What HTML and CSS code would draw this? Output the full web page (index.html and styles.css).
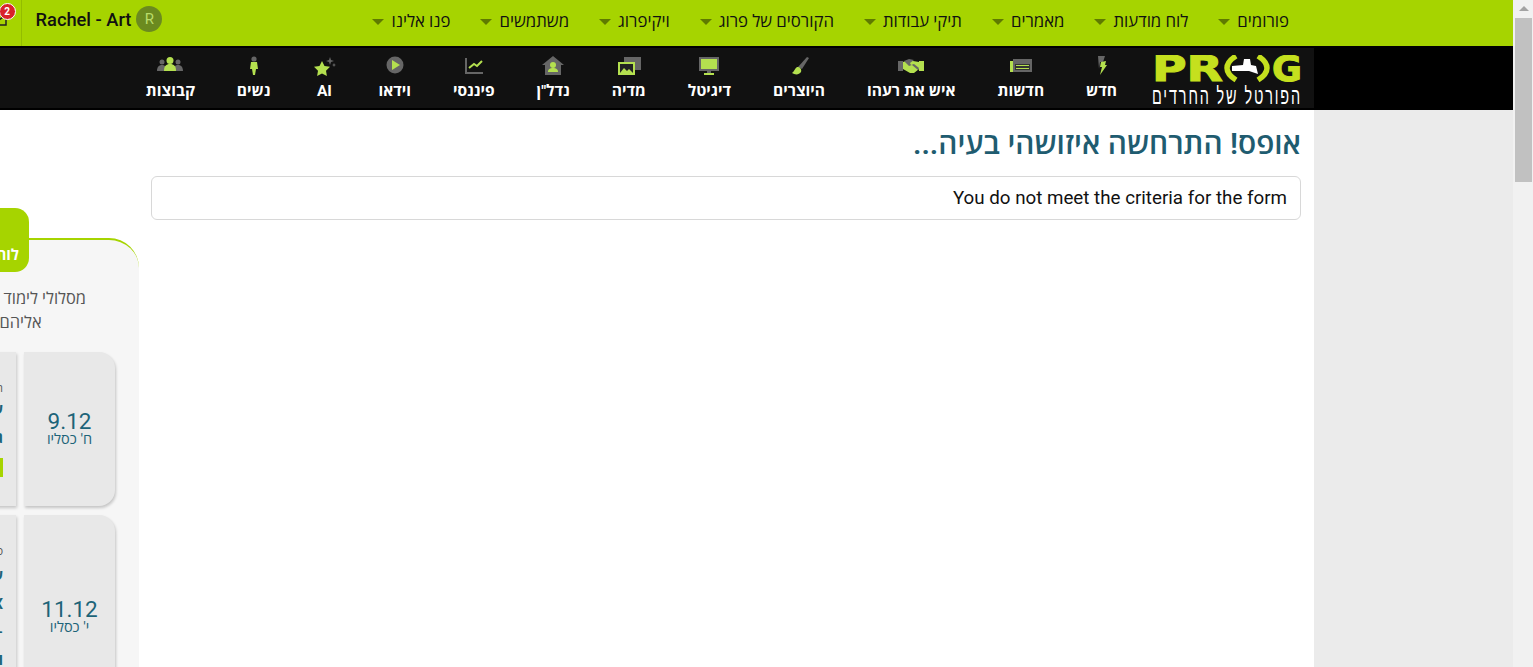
FILE: index.html
```html
<!DOCTYPE html>
<html lang="he" dir="rtl">
<head>
    <meta charset="UTF-8">
    <title>פרוג</title>
    <link rel="stylesheet" href="styles.css">
</head>
<body>
<div class="page">
    <div class="site">

        <!-- Top menu -->
        <div class="topbar">
            <ul class="top-menu">
                <li>פורומים</li>
                <li>לוח מודעות</li>
                <li>מאמרים</li>
                <li>תיקי עבודות</li>
                <li>הקורסים של פרוג</li>
                <li>ויקיפרוג</li>
                <li>משתמשים</li>
                <li>פנו אלינו</li>
            </ul>
            <div class="user-area">
                <div class="avatar">R</div>
                <div class="user-name" dir="ltr">Rachel - Art</div>
            </div>
            <div class="alerts">
                <svg class="alerts-icon" width="20" height="20" viewBox="0 0 20 20"><path d="M3 6h14v10H3zM3 6l7 5 7-5" fill="none" stroke="#222" stroke-width="1.5"/></svg>
                <span class="badge">2</span>
            </div>
        </div>

        <!-- Category bar -->
        <div class="catbar">
            <div class="catbar-inner">
                <div class="logo">
                    <svg class="logo-mark" width="150" height="50" viewBox="0 0 150 50">
                        <text x="0" y="26" class="logo-letters" textLength="71" lengthAdjust="spacingAndGlyphs">PR</text>
                        <text x="120" y="26" class="logo-letters" textLength="30" lengthAdjust="spacingAndGlyphs">G</text>
                        <path d="M84 1C76 6 75 10 75 13s1 7 9 12" fill="none" stroke="#c5e01e" stroke-width="5.500"/>
                        <path d="M106 1c8 5 9 9 9 12s-1 7-9 12" fill="none" stroke="#c5e01e" stroke-width="5.500"/>
                        <path d="M80 11l11-1 1-6h6l1 6 5 1 2 8-9-3-17 0z" fill="#fff"/>
                        <text x="150" y="49" class="logo-sub" textLength="150" lengthAdjust="spacingAndGlyphs">הפורטל של החרדים</text>
                    </svg>
                </div>
                <ul class="cat-menu">
                    <li>
                        <svg width="26" height="20" viewBox="0 0 26 20"><path d="M9 0h7l-2 6h-3l-1 7z" fill="#666"/><path d="M17 5l-1 4h2l-7 10 2-8h-2l1-5z" fill="#b4e04f"/></svg>
                        <span>חדש</span>
                    </li>
                    <li>
                        <svg width="26" height="20" viewBox="0 0 26 20"><path d="M5 3h19v13H5z" fill="#666"/><path d="M7 8h15v6H7z" fill="#333"/><path d="M8 9.500h13M8 12.500h13" stroke="#b4e04f" stroke-width="1.200"/><path d="M2 5h3v11H2z" fill="#b4e04f"/></svg>
                        <span>חדשות</span>
                    </li>
                    <li>
                        <svg width="26" height="20" viewBox="0 0 26 20"><path d="M0 5h5v10H0z" fill="#666"/><path d="M21 5h5v10h-5z" fill="#b4e04f"/><path d="M5 6l6-2 4 1 6 1v7l-5 4-4 0-7-4z" fill="#b4e04f"/><path d="M6 5l5-2 5 1-4 3 1 2 3-1 5 4-1 2-6-5-3 1-2-2z" fill="#666"/></svg>
                        <span>איש את רעהו</span>
                    </li>
                    <li>
                        <svg width="26" height="20" viewBox="0 0 26 20"><path d="M21 1l2 1-7 11-4-2z" fill="#666"/><path d="M11 11c3 0 5 2 4 5-2 3-6 3-9 1 2-1 3-5 5-6z" fill="#b4e04f"/></svg>
                        <span>היוצרים</span>
                    </li>
                    <li>
                        <svg width="26" height="20" viewBox="0 0 26 20"><path d="M3 1h20v14H3z" fill="#666"/><path d="M5 3h16v10H5z" fill="#b4e04f"/><path d="M11 15h4v2h-4z" fill="#666"/><path d="M8 17h10v2H8z" fill="#b4e04f"/></svg>
                        <span>דיגיטל</span>
                    </li>
                    <li>
                        <svg width="26" height="20" viewBox="0 0 26 20"><path d="M8 1h17v13H8z" fill="#666"/><path d="M2 6h17v13H2z" fill="#b4e04f"/><path d="M4 8h13v9H4z" fill="#222"/><path d="M4 17l4-5 3 3 2-2 4 4z" fill="#b4e04f"/></svg>
                        <span>מדיה</span>
                    </li>
                    <li>
                        <svg width="26" height="20" viewBox="0 0 26 20"><path d="M13 0l11 9h-3v10H5V9H2z" fill="#666"/><circle cx="13" cy="9" r="3" fill="#b4e04f"/><path d="M8 16c0-3 2-4 5-4s5 1 5 4z" fill="#b4e04f"/></svg>
                        <span>נדל"ן</span>
                    </li>
                    <li>
                        <svg width="26" height="20" viewBox="0 0 26 20"><path d="M5 2v15h17" fill="none" stroke="#666" stroke-width="2"/><path d="M8 12l5-4 3 2 5-5" fill="none" stroke="#b4e04f" stroke-width="2"/></svg>
                        <span>פיננסי</span>
                    </li>
                    <li>
                        <svg width="26" height="20" viewBox="0 0 26 20"><circle cx="13" cy="9" r="8.500" fill="#666"/><path d="M10 4l8 5-8 5z" fill="#b4e04f"/></svg>
                        <span>וידאו</span>
                    </li>
                    <li>
                        <svg width="26" height="20" viewBox="0 0 26 20"><path d="M11 5l2.500 5 5.500.8-4 3.900.9 5.300-4.900-2.600-4.900 2.600.9-5.300-4-3.900 5.500-.8z" fill="#b4e04f"/><path d="M19 1l1 3 3 1-3 1-1 3-1-3-3-1 3-1zM23 7l.7 1.500 1.300.5-1.300.5-.7 1.500-.7-1.500-1.300-.5 1.300-.5z" fill="#666"/></svg>
                        <span>AI</span>
                    </li>
                    <li>
                        <svg width="26" height="20" viewBox="0 0 26 20"><circle cx="13" cy="3" r="2.600" fill="#666"/><path d="M10 6h6l1 7h-2l-1 6h-2l-1-6H9z" fill="#b4e04f"/></svg>
                        <span>נשים</span>
                    </li>
                    <li>
                        <svg width="26" height="20" viewBox="0 0 26 20"><circle cx="5" cy="6" r="2.500" fill="#666"/><circle cx="21" cy="6" r="2.500" fill="#666"/><path d="M0 15c0-4 2-6 5-6s5 2 5 6zM16 15c0-4 2-6 5-6s5 2 5 6z" fill="#666"/><circle cx="13" cy="4.500" r="3.500" fill="#b4e04f"/><path d="M7 15c0-5 2-7 6-7s6 2 6 7z" fill="#b4e04f"/></svg>
                        <span>קבוצות</span>
                    </li>
                </ul>
            </div>
        </div>

        <div class="site-body">
            <!-- Error message -->
            <div class="main">
                <h1 class="error-title">אופס! התרחשה איזושהי בעיה...</h1>
                <div class="error-box" dir="ltr">You do not meet the criteria for the form</div>
            </div>

            <!-- Calendar side panel -->
            <div class="side">
                <div class="side-tab">לוח אירועים</div>
                <div class="side-panel">
                    <p class="side-intro">מסלולי לימוד חדשים<br>אליהם</p>
                    <div class="event">
                        <div class="event-date">
                            <div class="event-day">9.12</div>
                            <div class="event-heb">ח' כסליו</div>
                        </div>
                        <div class="event-body">
                            <div class="event-small">הרצאה</div>
                            <div class="event-line">עיצוב</div>
                            <div class="event-line">גרפי</div>
                            <div class="event-btn">להרשמה</div>
                        </div>
                    </div>
                    <div class="event event-tall">
                        <div class="event-date">
                            <div class="event-day">11.12</div>
                            <div class="event-heb">י' כסליו</div>
                        </div>
                        <div class="event-body">
                            <div class="event-small">סדנה</div>
                            <div class="event-line">עריכה</div>
                            <div class="event-line">X</div>
                            <div class="event-line">-</div>
                            <div class="event-line">וידאו</div>
                        </div>
                    </div>
                </div>
            </div>
        </div>
    </div>

    <!-- Window scrollbar -->
    <div class="scrollbar">
        <div class="scroll-up"></div>
        <div class="scroll-thumb"></div>
    </div>
</div>
</body>
</html>
```

FILE: styles.css
```css
* {
    box-sizing: border-box;
}

html, body {
    margin: 0;
    height: 100%;
    overflow: hidden;
}

body {
    font-family: Roboto, "Open Sans", "Noto Sans", sans-serif;
    color: #111;
}

ul {
    list-style: none;
    margin: 0;
    padding: 0;
}

.page {
    display: flex;
    direction: ltr;
    height: 667px;
    background-color: #ebebeb;
}

.site {
    flex: 1;
    min-width: 0;
    overflow: hidden;
    direction: rtl;
}

/* Top menu */
.topbar {
    display: flex;
    align-items: center;
    height: 46px;
    padding-right: 224px;
    background-color: #a6d400;
}

.top-menu {
    display: flex;
    gap: 30px;
    flex-shrink: 0;
    padding-bottom: 6px;
}

.top-menu li {
    display: flex;
    align-items: center;
    gap: 7px;
    font-size: 16.75px;
    font-weight: 500;
    white-space: nowrap;
}

.top-menu li::after {
    content: "";
    border-top: 6px solid #5f7a00;
    border-left: 6px solid transparent;
    border-right: 6px solid transparent;
    margin-top: 4px;
}

.user-area {
    display: flex;
    align-items: center;
    gap: 5px;
    flex-shrink: 0;
    height: 46px;
    margin-right: 210px;
    padding-left: 14px;
    padding-bottom: 8px;
    border-left: 1px solid #93bc00;
}

.user-name {
    font-size: 18.3px;
    font-weight: 500;
}

.avatar {
    display: flex;
    align-items: center;
    justify-content: center;
    width: 26px;
    height: 26px;
    border-radius: 50%;
    background-color: #6b8a1f;
    color: #b9dc6a;
    font-size: 15px;
}

.alerts {
    position: relative;
    flex-shrink: 0;
    width: 40px;
    height: 46px;
}

.alerts-icon {
    position: absolute;
    top: 9px;
    left: 8px;
}

.badge {
    position: absolute;
    top: 3px;
    left: 18px;
    width: 17px;
    height: 17px;
    border-radius: 50%;
    border: 1px solid #fff;
    background-color: #d8232a;
    color: #fff;
    font-size: 10px;
    font-weight: 700;
    line-height: 15px;
    text-align: center;
}

/* Category bar */
.catbar {
    height: 64px;
    padding: 2px 0;
    background-color: #000;
}

.catbar-inner {
    display: flex;
    align-items: stretch;
    width: 1314px;
    height: 60px;
    margin-right: 199px;
    background-color: #111;
}

.logo {
    flex-shrink: 0;
    width: 150px;
    margin-right: 12px;
    padding-top: 7px;
}

.logo-mark {
    display: block;
    direction: ltr;
}

.logo-letters {
    font-family: "DejaVu Sans", sans-serif;
    font-size: 36px;
    font-weight: 700;
    fill: #c5e01e;
    stroke: #c5e01e;
    stroke-width: 1px;
}

.logo-sub {
    direction: rtl;
    font-family: "Liberation Sans", sans-serif;
    font-size: 23px;
    letter-spacing: 3px;
    fill: #fff;
}

.cat-menu {
    display: flex;
    margin-right: 14px;
}

.cat-menu li {
    display: flex;
    flex-direction: column;
    align-items: center;
    padding: 8px 21px 0;
    color: #fff;
    font-size: 15.55px;
    font-weight: 700;
    white-space: nowrap;
}

.cat-menu svg {
    margin: 0 -1px;
}

.cat-menu span {
    margin-top: 5px;
    line-height: 20px;
}

/* Page body */
.site-body {
    display: flex;
    align-items: flex-start;
    width: 1314px;
    height: 557px;
    margin-right: 199px;
    padding-right: 13px;
    background-color: #fff;
}

.main {
    flex-shrink: 0;
    width: 1150px;
}

.error-title {
    margin: 15px 0 14px;
    color: #1f5c70;
    font-size: 29.8px;
    font-weight: 600;
    line-height: 37px;
}

.error-box {
    height: 44px;
    padding: 0 13px;
    border: 1px solid #d8d8d8;
    border-radius: 6px;
    font-size: 18.75px;
    line-height: 42px;
    text-align: right;
}

/* Side panel */
.side {
    flex-shrink: 0;
    width: 400px;
    margin-right: 12px;
    padding-top: 98px;
}

.side-tab {
    position: relative;
    z-index: 1;
    width: 130px;
    height: 64px;
    margin-right: 110px;
    padding: 38px 10px 0 0;
    border-radius: 14px;
    background-color: #a6d400;
    color: #fff;
    font-size: 15px;
    font-weight: 700;
    line-height: 18px;
    white-space: nowrap;
}

.side-panel {
    height: 429px;
    margin-top: -34px;
    padding: 47px 24px 0 0;
    border-top: 2px solid #a6d400;
    border-radius: 0 30px 0 0;
    background-color: #f6f6f6;
}

.side-intro {
    width: fit-content;
    margin: 0 29px 17px 0;
    color: #555;
    font-size: 16.4px;
    line-height: 24px;
    text-align: center;
    white-space: nowrap;
}

.event {
    display: flex;
    gap: 8px;
    margin-bottom: 9px;
}

.event-date,
.event-body {
    height: 154px;
    background-color: #e8e8e8;
    box-shadow: 1px 2px 3px rgba(0, 0, 0, 0.2);
}

.event-tall .event-date,
.event-tall .event-body {
    height: 204px;
}

.event-date {
    display: flex;
    flex-direction: column;
    align-items: center;
    justify-content: center;
    flex-shrink: 0;
    width: 91px;
    border-radius: 0 16px 16px 0;
    color: #1d6479;
}

.event-day {
    font-size: 22.5px;
    line-height: 24px;
    margin-top: -2px;
}

.event-heb {
    font-size: 14.5px;
    line-height: 14px;
}

.event-body {
    width: 200px;
    padding: 30px 13px 0 0;
    color: #1d6479;
    font-size: 15px;
    font-weight: 700;
    line-height: 28px;
}

.event-small {
    color: #555;
    font-size: 11px;
    font-weight: 400;
    line-height: 14px;
}

.event-tall .event-small {
    margin-bottom: 3px;
}

.event-btn {
    width: 120px;
    height: 19px;
    margin-top: 6px;
    background-color: #a6d400;
    color: #fff;
    font-size: 12px;
    line-height: 19px;
    text-align: center;
}

/* Scrollbar */
.scrollbar {
    flex-shrink: 0;
    width: 20px;
    padding: 0 1px 0 2px;
    background-color: #f1f1f1;
}

.scroll-up {
    width: 0;
    margin: 6px auto 7px;
    border-bottom: 5px solid #a3a3a3;
    border-left: 5px solid transparent;
    border-right: 5px solid transparent;
}

.scroll-thumb {
    height: 164px;
    background-color: #c1c1c1;
}
```
